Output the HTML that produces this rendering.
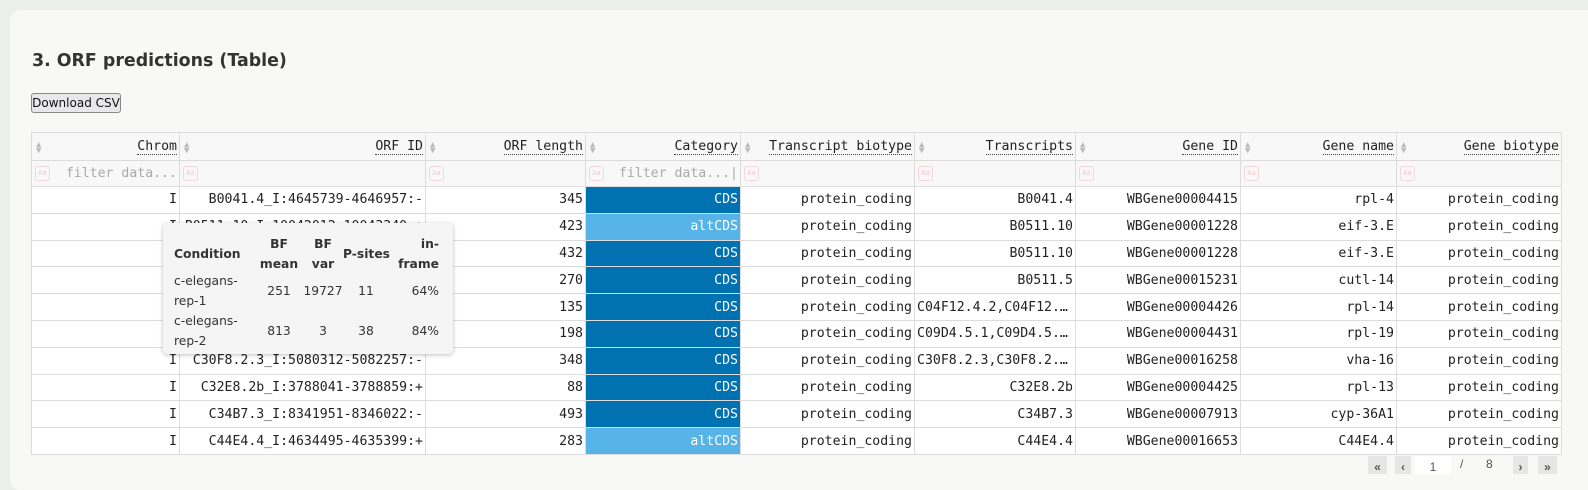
<!DOCTYPE html>
<html><head><style>
body{margin:0;background:#eceeeb;width:1588px;height:474px;overflow:hidden;font-family:"Liberation Sans",sans-serif;}
.card{position:absolute;left:10px;top:10px;width:1590px;height:480px;background:#f8f8f7;border-radius:10px;}
h3{position:absolute;left:32px;top:51px;margin:0;font-family:"DejaVu Sans",sans-serif;font-weight:bold;font-size:17.4px;color:#333;}
.btn{position:absolute;left:31px;top:93px;width:90px;height:20px;border:1px solid #888;border-radius:3px;background:#e8e8ea;font-size:12px;font-family:"DejaVu Sans",sans-serif;line-height:18px;text-align:center;color:#111;box-sizing:border-box;}
table.m{position:absolute;left:31px;top:132px;width:1530px;border-collapse:collapse;table-layout:fixed;font-family:"DejaVu Sans Mono",monospace;font-size:13.2px;color:#222;}
.m td{border:1px solid #dcdcdc;height:26.8px;padding:0 2px;text-align:right;white-space:nowrap;overflow:hidden;background:#fff;box-sizing:border-box;}
.m tr.h td{background:#f8f8f8;height:27.5px;position:relative}
.m tr.h span{border-bottom:1px dotted #444}
.m tr.f td{background:#f8f8f8;color:#aaa;height:26.5px;position:relative}
.ar{position:absolute;left:4px;top:9px;color:#bbb;font-size:9px;line-height:6px;text-align:left;font-style:normal}
.aa{position:absolute;left:3px;top:5px;width:13px;height:13px;border:1px solid #f4d6dc;border-radius:3px;font-size:7px;color:#f4c6ce;line-height:13px;text-align:center;font-style:normal}
.m td.c{background:#0072b2;color:#fff}
.m td.a{background:#56b4e9;color:#fff}
.tip{position:absolute;left:163px;top:223px;width:290px;height:131px;background:#f5f5f5;border-radius:4px;box-shadow:0 1px 4px rgba(0,0,0,.25);font-family:"DejaVu Sans",sans-serif;font-size:12.3px;color:#333;}
.tip div{position:absolute;white-space:nowrap;line-height:20px}
.b{font-weight:bold}
.pg{position:absolute;top:457px;font-size:12px;color:#555;}
.pb{position:absolute;top:456px;height:18px;background:#e6e6e6;color:#555;font-size:12px;text-align:center;line-height:22px;font-weight:bold}
</style></head><body>
<div class="card"></div>
<h3>3. ORF predictions (Table)</h3>
<div class="btn">Download CSV</div>
<table class="m">
<colgroup><col style="width:148px"><col style="width:246px"><col style="width:160px"><col style="width:155px"><col style="width:174px"><col style="width:161px"><col style="width:165px"><col style="width:156px"><col style="width:165px"></colgroup>
<tr class="h"><td><i class="ar">▲<br>▼</i><span>Chrom</span></td><td><i class="ar">▲<br>▼</i><span>ORF ID</span></td><td><i class="ar">▲<br>▼</i><span>ORF length</span></td><td><i class="ar">▲<br>▼</i><span>Category</span></td><td><i class="ar">▲<br>▼</i><span>Transcript biotype</span></td><td><i class="ar">▲<br>▼</i><span>Transcripts</span></td><td><i class="ar">▲<br>▼</i><span>Gene ID</span></td><td><i class="ar">▲<br>▼</i><span>Gene name</span></td><td><i class="ar">▲<br>▼</i><span>Gene biotype</span></td></tr>
<tr class="f"><td><i class="aa">Aa</i>filter data...</td><td><i class="aa">Aa</i></td><td><i class="aa">Aa</i></td><td><i class="aa">Aa</i>filter data...|</td><td><i class="aa">Aa</i></td><td><i class="aa">Aa</i></td><td><i class="aa">Aa</i></td><td><i class="aa">Aa</i></td><td><i class="aa">Aa</i></td></tr>
<tr><td>I</td><td>B0041.4_I:4645739-4646957:-</td><td>345</td><td class="c">CDS</td><td>protein_coding</td><td>B0041.4</td><td>WBGene00004415</td><td>rpl-4</td><td>protein_coding</td></tr>
<tr><td>I</td><td>B0511.10_I:10042012-10043340:+</td><td>423</td><td class="a">altCDS</td><td>protein_coding</td><td>B0511.10</td><td>WBGene00001228</td><td>eif-3.E</td><td>protein_coding</td></tr>
<tr><td>I</td><td>B0511.10_I:10042012-10043340:+</td><td>432</td><td class="c">CDS</td><td>protein_coding</td><td>B0511.10</td><td>WBGene00001228</td><td>eif-3.E</td><td>protein_coding</td></tr>
<tr><td>I</td><td>B0511.5_I:10011001-10012345:+</td><td>270</td><td class="c">CDS</td><td>protein_coding</td><td>B0511.5</td><td>WBGene00015231</td><td>cutl-14</td><td>protein_coding</td></tr>
<tr><td>I</td><td>C04F12.4.2_I:5678901-5679999:+</td><td>135</td><td class="c">CDS</td><td>protein_coding</td><td style="text-align:left">C04F12.4.2,C04F12.…</td><td>WBGene00004426</td><td>rpl-14</td><td>protein_coding</td></tr>
<tr><td>I</td><td>C09D4.5.1_I:9876543-9877777:+</td><td>198</td><td class="c">CDS</td><td>protein_coding</td><td style="text-align:left">C09D4.5.1,C09D4.5.…</td><td>WBGene00004431</td><td>rpl-19</td><td>protein_coding</td></tr>
<tr><td>I</td><td>C30F8.2.3_I:5080312-5082257:-</td><td>348</td><td class="c">CDS</td><td>protein_coding</td><td style="text-align:left">C30F8.2.3,C30F8.2.…</td><td>WBGene00016258</td><td>vha-16</td><td>protein_coding</td></tr>
<tr><td>I</td><td>C32E8.2b_I:3788041-3788859:+</td><td>88</td><td class="c">CDS</td><td>protein_coding</td><td>C32E8.2b</td><td>WBGene00004425</td><td>rpl-13</td><td>protein_coding</td></tr>
<tr><td>I</td><td>C34B7.3_I:8341951-8346022:-</td><td>493</td><td class="c">CDS</td><td>protein_coding</td><td>C34B7.3</td><td>WBGene00007913</td><td>cyp-36A1</td><td>protein_coding</td></tr>
<tr><td>I</td><td>C44E4.4_I:4634495-4635399:+</td><td>283</td><td class="a">altCDS</td><td>protein_coding</td><td>C44E4.4</td><td>WBGene00016653</td><td>C44E4.4</td><td>protein_coding</td></tr>
</table>
<div class="tip">
<div class="b" style="left:11px;top:21px">Condition</div>
<div class="b" style="left:88px;top:11px;width:56px;text-align:center">BF<br>mean</div>
<div class="b" style="left:140px;top:11px;width:40px;text-align:center">BF<br>var</div>
<div class="b" style="left:180px;top:21px">P-sites</div>
<div class="b" style="left:230px;top:11px;width:46px;text-align:right">in-<br>frame</div>
<div style="left:11px;top:48px">c-elegans-<br>rep-1</div>
<div style="left:88px;top:58px;width:56px;text-align:center">251</div>
<div style="left:138px;top:58px;width:44px;text-align:center">19727</div>
<div style="left:184px;top:58px;width:38px;text-align:center">11</div>
<div style="left:230px;top:58px;width:46px;text-align:right">64%</div>
<div style="left:11px;top:88px">c-elegans-<br>rep-2</div>
<div style="left:88px;top:98px;width:56px;text-align:center">813</div>
<div style="left:138px;top:98px;width:44px;text-align:center">3</div>
<div style="left:184px;top:98px;width:38px;text-align:center">38</div>
<div style="left:230px;top:98px;width:46px;text-align:right">84%</div>
</div>
<div class="pb" style="left:1368px;width:19px">«</div>
<div class="pb" style="left:1395px;width:16px">‹</div>
<div class="pb" style="left:1415px;width:36px;background:#fff;font-weight:normal">1</div>
<div class="pb" style="left:1513px;width:15px">›</div>
<div class="pb" style="left:1538px;width:19px">»</div>
<div class="pg" style="left:1460px">/</div><div class="pg" style="left:1486px">8</div>
</body></html>
